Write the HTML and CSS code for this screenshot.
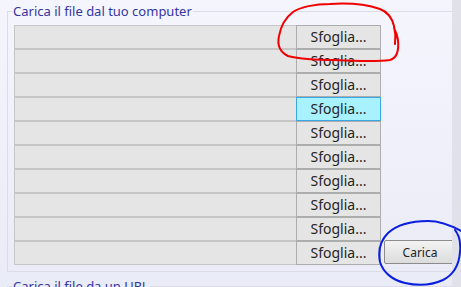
FILE: index.html
```html
<!DOCTYPE html>
<html lang="it">
    <head>
        <meta name="viewport" content="width=device-width, initial-scale=1.0">
        <title>Carica file</title>
        <link rel="stylesheet" href="styles.css">
    </head>
    <body>
        <div class="page">
            <div class="content">
                <fieldset class="group">
                    <legend>Carica il file dal tuo computer</legend>
                    <div class="upload">
                        <div class="files">
                            <div class="file-row"><span class="file-path"></span><button class="browse">Sfoglia...</button></div>
                            <div class="file-row"><span class="file-path"></span><button class="browse">Sfoglia...</button></div>
                            <div class="file-row"><span class="file-path"></span><button class="browse">Sfoglia...</button></div>
                            <div class="file-row"><span class="file-path"></span><button class="browse is-hover">Sfoglia...</button></div>
                            <div class="file-row"><span class="file-path"></span><button class="browse">Sfoglia...</button></div>
                            <div class="file-row"><span class="file-path"></span><button class="browse">Sfoglia...</button></div>
                            <div class="file-row"><span class="file-path"></span><button class="browse">Sfoglia...</button></div>
                            <div class="file-row"><span class="file-path"></span><button class="browse">Sfoglia...</button></div>
                            <div class="file-row"><span class="file-path"></span><button class="browse">Sfoglia...</button></div>
                            <div class="file-row"><span class="file-path"></span><button class="browse">Sfoglia...</button></div>
                        </div>
                        <button class="submit">Carica</button>
                    </div>
                </fieldset>
                <fieldset class="group">
                    <legend>Carica il file da un URL</legend>
                </fieldset>
            </div>
            <div class="scrollbar"></div>
        </div>
        <!-- hand-drawn marks over the screenshot -->
        <svg class="marks" width="461" height="287" viewBox="0 0 461 287">
            <path class="mark mark--red" d="M395,44 C396,36 395,30 394,26 C392,18 388,12 380,9 C365,4 345,3 330,4 C315,4 300,7 293,12 C285,18 281,25 279,36 C277,45 280,52 288,56 C300,59 318,60 335,60 C355,61 375,62 390,60 C397,58 399,50 398,40 C397,34 395,30 394,28"/>
            <path class="mark mark--blue" d="M461,231 C452,226 440,221 428,221 C412,221 398,224 388,233 C380,241 378,252 380,262 C383,272 392,280 405,283 C418,286 432,285 443,280 C453,275 459,265 460,252 C461,242 459,235 455,230"/>
        </svg>
    </body>
</html>
```

FILE: styles.css
```css
html, body {
    margin: 0;
    height: 100%;
}
body {
    font-family: "Noto Sans", "Open Sans", sans-serif;
    background: linear-gradient(#f5f5fd, #e9ebf6);
    overflow: hidden;
}
.page {
    display: flex;
    height: 100%;
}
.content {
    flex: 1;
    overflow: hidden;
}
.scrollbar {
    width: 9px;
    background-color: #e1e1e9;
}
.group {
    margin: 3px -20px 0 7px;
    padding: 5px 0 6px 6px;
    border: 1px solid #dcdce6;
    border-right: none;
    min-width: 0;
}
.group + .group {
    margin-top: 6px;
}
.group legend {
    margin-left: -2px;
    padding: 0 1px;
    font-size: 13px;
    line-height: 17px;
    color: #3535a2;
}
.upload {
    display: flex;
    align-items: flex-end;
    gap: 3px;
}
.files {
    width: 367px;
}
.file-row {
    display: flex;
    height: 24px;
}
.file-path {
    flex: 1;
    border: 1px solid #c6c6c6;
    border-right: none;
    background-color: #e5e5e5;
}
.browse {
    width: 85px;
    margin: 0;
    padding: 0 0 1px;
    border: 1px solid #adadad;
    background-color: #e5e5e5;
    font-family: inherit;
    font-size: 14px;
    color: #262626;
}
.browse.is-hover {
    background-color: #a8f1ff;
    border-color: #3ba6e4;
}
.submit {
    width: 72px;
    height: 24px;
    margin: 0 0 1px;
    padding: 0;
    flex-shrink: 0;
    border: 1px solid #8c8c8c;
    border-radius: 2px;
    background: linear-gradient(#f3f3f3, #dcdcdc);
    font-family: inherit;
    font-size: 12px;
    color: #222;
}
.marks {
    position: absolute;
    top: 0;
    left: 0;
    pointer-events: none;
}
.mark {
    fill: none;
    stroke-width: 2;
    stroke-linecap: round;
    stroke-linejoin: round;
}
.mark--red {
    stroke: #f00000;
}
.mark--blue {
    stroke: #0a1ee0;
}
```
